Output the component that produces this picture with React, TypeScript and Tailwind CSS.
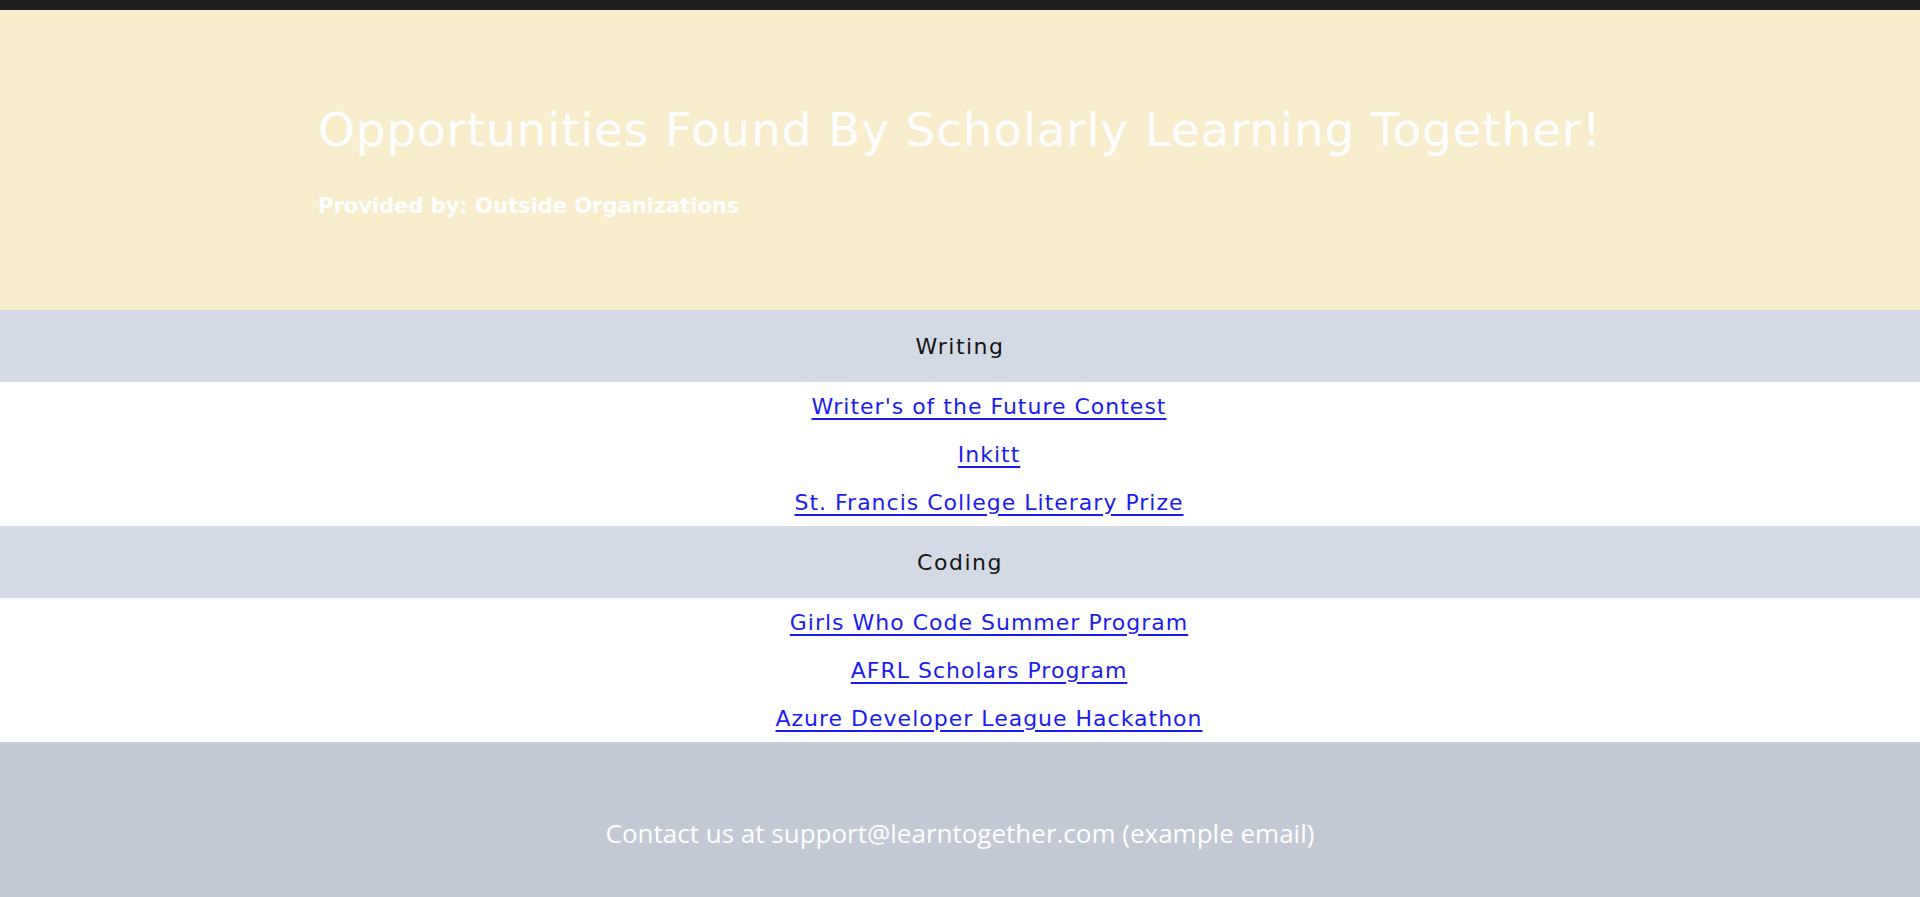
import React from "react";

type Section = {
  title: string;
  links: string[];
};

const sections: Section[] = [
  {
    title: "Writing",
    links: ["Writer's of the Future Contest", "Inkitt", "St. Francis College Literary Prize"],
  },
  {
    title: "Coding",
    links: ["Girls Who Code Summer Program", "AFRL Scholars Program", "Azure Developer League Hackathon"],
  },
];

const sans = "font-['DejaVu_Sans',sans-serif]";

export default function App() {
  return (
    <div className={`min-h-screen bg-white ${sans}`}>
      <div className="h-[10px] bg-[#1f1f21]" />

      <header className="h-[300px] bg-[#f8eecc]">
        <div className="mx-auto w-[1284px] pt-[92px]">
          <h1 className="text-[47px] leading-[56px] font-medium tracking-[0.8px] text-white">
            Opportunities Found By Scholarly Learning Together!
          </h1>
          <p className="mt-[34px] text-[21px] leading-[28px] font-bold text-white">
            Provided by: Outside Organizations
          </p>
        </div>
      </header>

      {sections.map((section) => (
        <section key={section.title}>
          <div className="flex h-[72px] items-center justify-center bg-[#d3d9e5] text-[22px] tracking-[1.5px] text-[#151515]">
            {section.title}
          </div>
          <ul className="pl-[58px]">
            {section.links.map((link) => (
              <li key={link} className="flex h-[48px] items-center justify-center">
                <a href="#" className="text-[22px] tracking-[1px] text-[#1c1cf0] underline underline-offset-[4px]">
                  {link}
                </a>
              </li>
            ))}
          </ul>
        </section>
      ))}

      <footer className="flex h-[155px] items-center justify-center bg-[#c3c9d5] pt-[28px]">
        <p className="font-['Open_Sans',sans-serif] text-[26px] text-white">
          Contact us at support@learntogether.com (example email)
        </p>
      </footer>
    </div>
  );
}
